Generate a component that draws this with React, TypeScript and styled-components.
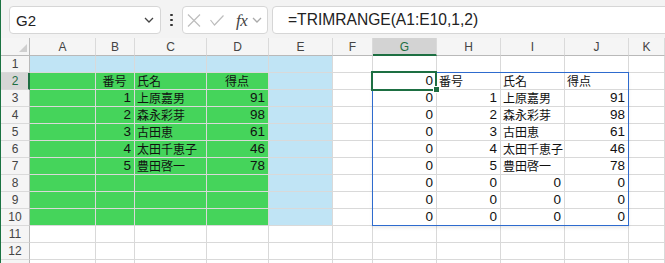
import React from 'react';
import styled, { createGlobalStyle, css } from 'styled-components';

const GlobalStyle = createGlobalStyle`
  html, body { margin: 0; padding: 0; background: #fff; overflow: hidden; }
  body { font-family: "Liberation Sans", Arial, sans-serif; }
  * { box-sizing: border-box; }
`;

const Frame = styled.div`
  width: 665px;
  height: 263px;
  border-left: 1px solid #1b7342;
  display: flex;
  flex-direction: column;
  overflow: hidden;
  background: #fff;
`;

const FormulaBar = styled.div`
  height: 38px;
  flex: none;
  background: #f3f3f3;
  display: flex;
  align-items: flex-start;
  padding: 6px 0 0 8px;
`;

const Box = styled.div<{ $w?: number; $grow?: boolean; $pl?: number }>`
  height: 28px;
  background: #fff;
  border: 1px solid #d6d6d6;
  border-radius: 4px;
  display: flex;
  align-items: center;
  padding-left: ${(p) => p.$pl ?? 6}px;
  padding-right: 6px;
  ${(p) => (p.$w ? css`width: ${p.$w}px; flex: none;` : '')}
  ${(p) => (p.$grow ? css`flex: 1; margin-right: -8px; margin-left: 4px;` : '')}
`;

const NameText = styled.span`
  font-size: 15px;
  color: #222;
  flex: 1;
  line-height: 1;
`;

const FormulaText = styled.span`
  font-size: 15.6px;
  color: #222;
  line-height: 1;
  padding-left: 9px;
`;

const DotsCol = styled.div`
  width: 21px;
  height: 28px;
  flex: none;
  display: flex;
  flex-direction: column;
  align-items: center;
  justify-content: center;
  gap: 2.5px;
`;

const Dot = styled.span`
  width: 2.5px;
  height: 2.5px;
  border-radius: 50%;
  background: #333;
`;

const Slot = styled.span<{ $ml: number }>`
  display: inline-flex;
  align-items: center;
  margin-left: ${(p) => p.$ml}px;
  flex: none;
`;

const Fx = styled.span`
  font-family: "Liberation Serif", "DejaVu Serif", serif;
  font-style: italic;
  font-size: 17px;
  color: #444;
  line-height: 1;
  letter-spacing: -0.5px;
`;

const Sheet = styled.div`
  display: grid;
  grid-template-columns: 29px 66px 39px 72px 62px 64px 40px 64px 64px 64px 64px 1fr;
  grid-template-rows: 18px;
  grid-auto-rows: 17px;
  position: relative;
  flex: none;
`;

const Corner = styled.div`
  background: #f5f5f5;
  border-right: 1px solid #b9b9b9;
  border-bottom: 1px solid #b9b9b9;
  position: relative;
  &::after {
    content: '';
    position: absolute;
    right: 2px;
    bottom: 3px;
    width: 0;
    height: 0;
    border-left: 8px solid transparent;
    border-bottom: 8px solid #cfcfcf;
  }
`;

const ColHead = styled.div<{ $sel?: boolean }>`
  background: ${(p) => (p.$sel ? '#d3d3d3' : '#f5f5f5')};
  border-right: 1px solid #dadada;
  border-bottom: ${(p) => (p.$sel ? '2px solid #1d6f42' : '1px solid #b9b9b9')};
  font-size: 12px;
  color: ${(p) => (p.$sel ? '#1d6f42' : '#444')};
  display: flex;
  align-items: center;
  justify-content: center;
  padding-top: ${(p) => (p.$sel ? '1px' : '0')};
`;

const RowHead = styled.div<{ $sel?: boolean }>`
  background: ${(p) => (p.$sel ? '#d6d6d6' : '#f5f5f5')};
  border-right: ${(p) => (p.$sel ? '2px solid #1d6f42' : '1px solid #b9b9b9')};
  border-bottom: 1px solid #dadada;
  font-size: 12px;
  color: ${(p) => (p.$sel ? '#1d6f42' : '#444')};
  display: flex;
  align-items: center;
  justify-content: center;
  padding-left: ${(p) => (p.$sel ? '1px' : '0')};
`;

type Fill = 'green' | 'blue' | undefined;
type Align = 'left' | 'right' | 'center';

const fills: Record<string, string> = {
  green: '#45d45b',
  blue: '#c0e4f5',
};

const Cell = styled.div<{ $fill?: Fill; $align?: Align; $num?: boolean }>`
  background: ${(p) => (p.$fill ? fills[p.$fill] : '#fff')};
  border-right: 1px solid #d9d9d9;
  border-bottom: 1px solid #d9d9d9;
  display: flex;
  align-items: center;
  justify-content: ${(p) =>
    p.$align === 'right' ? 'flex-end' : p.$align === 'center' ? 'center' : 'flex-start'};
  padding: 0 3px 0 2px;
  font-family: ${(p) =>
    p.$num ? '"Liberation Sans", Arial, sans-serif' : '"Noto Sans CJK JP", sans-serif'};
  font-size: ${(p) => (p.$num ? '13.5px' : '12px')};
  color: #111;
  white-space: nowrap;
  overflow: visible;
  line-height: 1;
`;

const SpillRange = styled.div`
  position: absolute;
  left: 371px;
  top: 34px;
  width: 257px;
  height: 154px;
  border: 1px solid #2e6bce;
  box-shadow: 0 2px 3px rgba(0, 0, 0, 0.08);
  pointer-events: none;
`;

const ActiveCell = styled.div`
  position: absolute;
  left: 370px;
  top: 33px;
  width: 66px;
  height: 20px;
  border: 2px solid #1d6f42;
  pointer-events: none;
`;

const FillHandle = styled.div`
  position: absolute;
  left: 432px;
  top: 48px;
  width: 7px;
  height: 7px;
  background: #1d6f42;
  border: 1px solid #fff;
  pointer-events: none;
`;

const Chevron = ({ color }: { color: string }) => (
  <svg width="10" height="6" viewBox="0 0 10 6">
    <polyline points="1,1 5,5 9,1" fill="none" stroke={color} strokeWidth="1.3" />
  </svg>
);

const Cross = () => (
  <svg width="14" height="13" viewBox="0 0 14 13">
    <path d="M1 0.5 L13 12.5 M13 0.5 L1 12.5" stroke="#bdbdbd" strokeWidth="1.2" fill="none" />
  </svg>
);

const Check = () => (
  <svg width="14" height="11" viewBox="0 0 14 11">
    <polyline points="0.5,5 4.5,10 13.5,0.5" stroke="#bdbdbd" strokeWidth="1.2" fill="none" />
  </svg>
);

const COLS = ['A', 'B', 'C', 'D', 'E', 'F', 'G', 'H', 'I', 'J', 'K'];

type CellData = { v?: string; align?: Align; num?: boolean; fill?: Fill };

const people: [number, string, number][] = [
  [1, '上原嘉男', 91],
  [2, '森永彩芽', 98],
  [3, '古田恵', 61],
  [4, '太田千恵子', 46],
  [5, '豊田啓一', 78],
];

const VISIBLE_ROW_LABELS = 12;

function buildRows(): CellData[][] {
  const rows: CellData[][] = [];
  for (let r = 1; r <= 13; r++) {
    const row: CellData[] = COLS.map(() => ({}));
    if (r <= 10) {
      for (let c = 0; c <= 4; c++) row[c].fill = 'blue';
      if (r >= 2) for (let c = 0; c <= 3; c++) row[c].fill = 'green';
    }
    if (r === 2) {
      row[1] = { ...row[1], v: '番号', align: 'center' };
      row[2] = { ...row[2], v: '氏名', align: 'left' };
      row[3] = { ...row[3], v: '得点', align: 'center' };
      row[6] = { v: '0', align: 'right', num: true };
      row[7] = { v: '番号', align: 'left' };
      row[8] = { v: '氏名', align: 'left' };
      row[9] = { v: '得点', align: 'left' };
    } else if (r >= 3 && r <= 7) {
      const [n, name, s] = people[r - 3];
      row[1] = { ...row[1], v: String(n), align: 'right', num: true };
      row[2] = { ...row[2], v: name, align: 'left' };
      row[3] = { ...row[3], v: String(s), align: 'right', num: true };
      row[6] = { v: '0', align: 'right', num: true };
      row[7] = { v: String(n), align: 'right', num: true };
      row[8] = { v: name, align: 'left' };
      row[9] = { v: String(s), align: 'right', num: true };
    } else if (r >= 8 && r <= 10) {
      for (let c = 6; c <= 9; c++) row[c] = { v: '0', align: 'right', num: true };
    }
    rows.push(row);
  }
  return rows;
}

const rows = buildRows();

export default function App() {
  return (
    <>
      <GlobalStyle />
      <Frame>
        <FormulaBar>
          <Box $w={152}>
            <NameText>G2</NameText>
            <Chevron color="#444" />
          </Box>
          <DotsCol>
            <Dot />
            <Dot />
            <Dot />
          </DotsCol>
          <Box $w={86} $pl={4}>
            <Slot $ml={0}>
              <Cross />
            </Slot>
            <Slot $ml={9}>
              <Check />
            </Slot>
            <Slot $ml={12}>
              <Fx>fx</Fx>
            </Slot>
            <Slot $ml={5}>
              <Chevron color="#aaa" />
            </Slot>
          </Box>
          <Box $grow>
            <FormulaText>=TRIMRANGE(A1:E10,1,2)</FormulaText>
          </Box>
        </FormulaBar>
        <Sheet>
          <Corner />
          {COLS.map((c) => (
            <ColHead key={c} $sel={c === 'G'}>
              {c}
            </ColHead>
          ))}
          {rows.map((row, i) => (
            <React.Fragment key={i}>
              <RowHead $sel={i === 1}>{i < VISIBLE_ROW_LABELS ? i + 1 : ''}</RowHead>
              {row.map((cell, j) => (
                <Cell key={j} $fill={cell.fill} $align={cell.align} $num={cell.num}>
                  {cell.v}
                </Cell>
              ))}
            </React.Fragment>
          ))}
          <SpillRange />
          <ActiveCell />
          <FillHandle />
        </Sheet>
      </Frame>
    </>
  );
}
